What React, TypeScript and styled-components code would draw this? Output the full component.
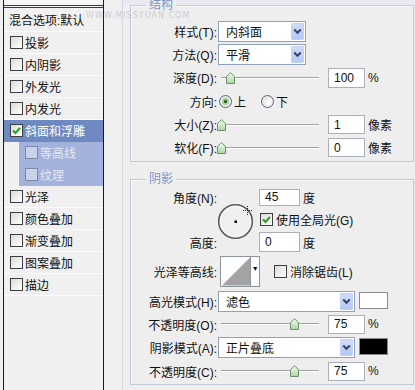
import styled, { createGlobalStyle } from 'styled-components';

const GlobalStyle = createGlobalStyle`
  html, body {
    margin: 0;
    padding: 0;
  }
  body {
    width: 415px;
    height: 390px;
    overflow: hidden;
    background: #eeeeee;
    font-family: "Liberation Sans", "Noto Sans CJK SC", sans-serif;
    font-size: 12px;
    color: #111;
  }
`;

const Dialog = styled.div`
  position: relative;
  display: flex;
  width: 415px;
  height: 390px;
  overflow: hidden;
  background: #eeeeee;
`;

const Watermark = styled.div`
  position: absolute;
  left: 86px;
  top: 11px;
  font-family: "DejaVu Sans", sans-serif;
  font-size: 8px;
  letter-spacing: 1px;
  color: rgba(140, 145, 170, 0.4);
  pointer-events: none;
`;

/* ---------- left style list ---------- */

const Sidebar = styled.div`
  flex: none;
  width: 122px;
  box-sizing: border-box;
  padding: 0 18px 0 3px;
  background: #efefef;
`;

const ListBox = styled.div`
  height: 100%;
  display: flex;
  flex-direction: column;
  border-left: 1px solid #1b1b1b;
  border-right: 1px solid #1b1b1b;
  background: #f0f0f0;
`;

const TopStub = styled.div`
  height: 5px;
  background: #f6f6f6;
  border-bottom: 3px double #3a3a3a;
`;

const BlendRow = styled.div`
  height: 23px;
  display: flex;
  align-items: center;
  padding-left: 5px;
  border-bottom: 1px solid #fbfbfb;
  color: #111;
`;

const Item = styled.div<{ $active?: boolean; $sub?: boolean }>`
  height: 22px;
  box-sizing: border-box;
  display: flex;
  align-items: center;
  gap: 1px;
  margin-left: ${p => (p.$sub ? '15px' : '0')};
  padding-left: 6px;
  border-bottom: 1px solid ${p => (p.$active ? '#6f89c2' : p.$sub ? '#a5b4da' : '#fbfbfb')};
  background: ${p => (p.$active ? '#6f89c2' : p.$sub ? '#a3b2da' : 'transparent')};
  color: ${p => (p.$active ? '#ffffff' : p.$sub ? '#e4e9f5' : '#111')};
`;

const Box = styled.span<{ $faded?: boolean }>`
  flex: none;
  width: 13px;
  height: 13px;
  box-sizing: border-box;
  display: inline-flex;
  align-items: center;
  justify-content: center;
  border: 1px solid ${p => (p.$faded ? '#7d88a6' : '#3c3f44')};
  background: ${p => (p.$faded ? '#c9d2ea' : 'linear-gradient(135deg, #dcdcd4, #ffffff)')};
  margin-right: 1px;
`;

const Check = () => (
  <svg width="9" height="9" viewBox="0 0 9 9">
    <path d="M1 4.5 L3.5 7 L8 1.8" fill="none" stroke="#21a121" strokeWidth="2" />
  </svg>
);

const CheckBox = ({ checked, faded }: { checked?: boolean; faded?: boolean }) => (
  <Box $faded={faded}>{checked && <Check />}</Box>
);

/* ---------- right options ---------- */

const Pane = styled.div`
  flex: 1;
  box-sizing: border-box;
  display: flex;
  flex-direction: column;
  padding: 5px 1px 0 7px;
  border-left: 1px solid #d6d8e4;
  background: linear-gradient(#e9e9f2 0, #e9e9f2 5px, #eeeeee 5px);
`;

const Group = styled.div<{ $pt: number; $mt?: number }>`
  position: relative;
  margin-top: ${p => p.$mt ?? 0}px;
  padding-top: ${p => p.$pt}px;
  padding-bottom: 2px;
  border: 1px solid #c2c7da;
  box-shadow: inset 1px 1px 0 #fafafa;
`;

const Legend = styled.span`
  position: absolute;
  left: 15px;
  top: -8px;
  padding: 0 3px;
  line-height: 14px;
  font-size: 12px;
  color: #7d97c9;
  background: #eeeeee;
`;

const Row = styled.div<{ $h: number }>`
  height: ${p => p.$h}px;
  display: flex;
  align-items: center;
`;

const Label = styled.span`
  flex: none;
  width: 86px;
  text-align: right;
  white-space: nowrap;
`;

const SelectBox = styled.div<{ $w: number }>`
  flex: none;
  width: ${p => p.$w}px;
  height: 21px;
  box-sizing: border-box;
  margin-left: 1px;
  display: flex;
  align-items: center;
  justify-content: space-between;
  padding: 1px 1px 1px 7px;
  border: 1px solid #8ea2bd;
  background: #ffffff;
`;

const ArrowBtn = styled.span`
  width: 13px;
  height: 17px;
  display: flex;
  align-items: center;
  justify-content: center;
  border-radius: 2px;
  background: linear-gradient(#d3ddfa, #b3c5f2);
  box-shadow: inset 0 0 0 1px #c4d1f5;
`;

const Select = ({ value, width }: { value: string; width: number }) => (
  <SelectBox $w={width}>
    <span>{value}</span>
    <ArrowBtn>
      <svg width="9" height="7" viewBox="0 0 9 7">
        <path d="M1.2 1.5 L4.5 4.8 L7.8 1.5" fill="none" stroke="#34466f" strokeWidth="2" />
      </svg>
    </ArrowBtn>
  </SelectBox>
);

const Track = styled.div`
  position: relative;
  flex: none;
  width: 98px;
  height: 14px;
  margin-left: 4px;
  &::before {
    content: '';
    position: absolute;
    left: 0;
    right: 0;
    top: 6px;
    border-top: 1px solid #a2a2a2;
    border-bottom: 1px solid #ffffff;
  }
`;

const Thumb = styled.svg`
  position: absolute;
  top: 1px;
`;

const Slider = ({ frac }: { frac: number }) => (
  <Track>
    <Thumb width="9" height="12" viewBox="0 0 9 12" style={{ left: Math.round(frac * 98 - 4.5) + 'px' }}>
      <defs>
        <linearGradient id="thumbFill" x1="0" y1="0" x2="0" y2="1">
          <stop offset="0" stopColor="#f4fbf0" />
          <stop offset="1" stopColor="#a9d6a0" />
        </linearGradient>
      </defs>
      <path d="M0.5 11.5 V4.5 L4.5 0.7 L8.5 4.5 V11.5 Z" fill="url(#thumbFill)" stroke="#6f8d6f" />
    </Thumb>
  </Track>
);

const NumBox = styled.div<{ $w?: number; $ml?: number; $h?: number }>`
  flex: none;
  width: ${p => p.$w ?? 37}px;
  height: ${p => p.$h ?? 19}px;
  box-sizing: border-box;
  margin-left: ${p => p.$ml ?? 9}px;
  display: flex;
  align-items: center;
  padding-left: 5px;
  border: 1px solid #a9b0b8;
  background: #ffffff;
`;

const Unit = styled.span`
  margin-left: 3px;
  white-space: nowrap;
`;

const Radio = styled.span<{ $on?: boolean; $ml?: number }>`
  position: relative;
  flex: none;
  width: 13px;
  height: 13px;
  box-sizing: border-box;
  margin: 0 2px 0 ${p => p.$ml ?? 0}px;
  border-radius: 50%;
  border: 1px solid #56677a;
  background: radial-gradient(circle at 60% 60%, #ffffff, #dcdcd6);
  &::after {
    content: '';
    display: ${p => (p.$on ? 'block' : 'none')};
    position: absolute;
    left: 2px;
    top: 2px;
    width: 7px;
    height: 7px;
    box-sizing: border-box;
    border-radius: 50%;
    border: 2px solid #9ccf90;
    background: #2f4a2f;
  }
`;

const AngleBlock = styled.div`
  display: grid;
  grid-template-columns: 86px 42px auto;
  grid-template-rows: 22px 23px 22px;
  align-items: center;
`;

const Dial = styled.svg`
  grid-column: 2;
  grid-row: 1 / span 3;
  margin-top: 5px;
`;

const Cell = styled.div<{ $row: number }>`
  grid-column: 3;
  grid-row: ${p => p.$row};
  display: flex;
  align-items: center;
`;

const GridLabel = styled(Label)<{ $row: number }>`
  grid-column: 1;
  grid-row: ${p => p.$row};
`;

const ContourSwatch = styled.div`
  flex: none;
  width: 40px;
  height: 31px;
  box-sizing: border-box;
  margin-left: 3px;
  display: flex;
  border: 1px solid #8d939a;
  background: #ffffff;
`;

const ContourDrop = styled.span`
  width: 8px;
  display: flex;
  justify-content: center;
  padding-top: 8px;
  border-left: 1px solid #8d939a;
  font-size: 7px;
  line-height: 7px;
`;

const ColorChip = styled.span<{ $c: string }>`
  flex: none;
  width: 29px;
  height: 17px;
  box-sizing: border-box;
  margin: 0 0 2px 4px;
  align-self: center;
  border: 1px solid #8a8a8a;
  background: ${p => p.$c};
`;

const Inline = styled.span<{ $ml: number }>`
  display: flex;
  align-items: center;
  gap: 2px;
  margin-left: ${p => p.$ml}px;
  white-space: nowrap;
`;

const listItems = [
  { name: '投影' },
  { name: '内阴影' },
  { name: '外发光' },
  { name: '内发光' },
  { name: '斜面和浮雕', active: true, checked: true },
  { name: '等高线', sub: true },
  { name: '纹理', sub: true },
  { name: '光泽' },
  { name: '颜色叠加' },
  { name: '渐变叠加' },
  { name: '图案叠加' },
  { name: '描边' },
];

export default function App() {
  return (
    <Dialog>
      <GlobalStyle />
      <Sidebar>
        <ListBox>
          <TopStub />
          <BlendRow>混合选项:默认</BlendRow>
          {listItems.map(it => (
            <Item key={it.name} $active={it.active} $sub={it.sub}>
              <CheckBox checked={it.checked} faded={it.sub} />
              {it.name}
            </Item>
          ))}
        </ListBox>
      </Sidebar>

      <Pane>
        <Group $pt={14}>
          <Legend>结构</Legend>
          <Row $h={23}>
            <Label>样式(T):</Label>
            <Select value="内斜面" width={88} />
          </Row>
          <Row $h={23}>
            <Label>方法(Q):</Label>
            <Select value="平滑" width={88} />
          </Row>
          <Row $h={23}>
            <Label>深度(D):</Label>
            <Slider frac={0.1} />
            <NumBox $h={20}>100</NumBox>
            <Unit>%</Unit>
          </Row>
          <Row $h={24}>
            <Label>方向:</Label>
            <Radio $on $ml={2} />上
            <Radio $ml={15} />下
          </Row>
          <Row $h={23}>
            <Label>大小(Z):</Label>
            <Slider frac={0.01} />
            <NumBox>1</NumBox>
            <Unit>像素</Unit>
          </Row>
          <Row $h={23}>
            <Label>软化(F):</Label>
            <Slider frac={0} />
            <NumBox>0</NumBox>
            <Unit>像素</Unit>
          </Row>
        </Group>

        <Group $pt={6} $mt={17}>
          <Legend>阴影</Legend>
          <AngleBlock>
            <GridLabel $row={1}>角度(N):</GridLabel>
            <Dial width="38" height="38" viewBox="0 0 38 38">
              <circle cx="18.5" cy="18.5" r="16.8" fill="#efefef" stroke="#5c5c5c" strokeWidth="1.6" />
              <circle cx="18.5" cy="18.5" r="15.2" fill="none" stroke="#ffffff" strokeWidth="1" />
              <rect x="17.5" y="17.5" width="2.5" height="2.5" fill="#000" />
              <g fill="#222">
                <rect x="30" y="3" width="1" height="1" />
                <rect x="30" y="5" width="1" height="1" />
                <rect x="30" y="9" width="1" height="1" />
                <rect x="30" y="11" width="1" height="1" />
                <rect x="26" y="7" width="1" height="1" />
                <rect x="28" y="7" width="1" height="1" />
                <rect x="32" y="7" width="1" height="1" />
                <rect x="34" y="7" width="1" height="1" />
                <rect x="30" y="7" width="1" height="1" />
              </g>
            </Dial>
            <Cell $row={1}>
              <NumBox $w={41} $h={17} $ml={0}>45</NumBox>
              <Unit>度</Unit>
            </Cell>
            <Cell $row={2}>
              <Inline $ml={1}>
                <CheckBox checked />
                使用全局光(G)
              </Inline>
            </Cell>
            <GridLabel $row={3}>高度:</GridLabel>
            <Cell $row={3}>
              <NumBox $w={41} $h={20} $ml={0}>0</NumBox>
              <Unit>度</Unit>
            </Cell>
          </AngleBlock>

          <Row $h={36}>
            <Label>光泽等高线:</Label>
            <ContourSwatch>
              <svg width="30" height="29" viewBox="0 0 30 29">
                <path d="M1 29 L30 0 L30 29 Z" fill="#a3a3a3" />
              </svg>
              <ContourDrop>▼</ContourDrop>
            </ContourSwatch>
            <Inline $ml={14}>
              <CheckBox />
              消除锯齿(L)
            </Inline>
          </Row>
          <Row $h={24}>
            <Label>高光模式(H):</Label>
            <Select value="滤色" width={137} />
            <ColorChip $c="#ffffff" />
          </Row>
          <Row $h={22}>
            <Label>不透明度(O):</Label>
            <Slider frac={0.75} />
            <NumBox>75</NumBox>
            <Unit>%</Unit>
          </Row>
          <Row $h={25}>
            <Label>阴影模式(A):</Label>
            <Select value="正片叠底" width={137} />
            <ColorChip $c="#000000" />
          </Row>
          <Row $h={22}>
            <Label>不透明度(C):</Label>
            <Slider frac={0.75} />
            <NumBox>75</NumBox>
            <Unit>%</Unit>
          </Row>
        </Group>
      </Pane>

      <Watermark>WWW.MISSYUAN.COM</Watermark>
    </Dialog>
  );
}
